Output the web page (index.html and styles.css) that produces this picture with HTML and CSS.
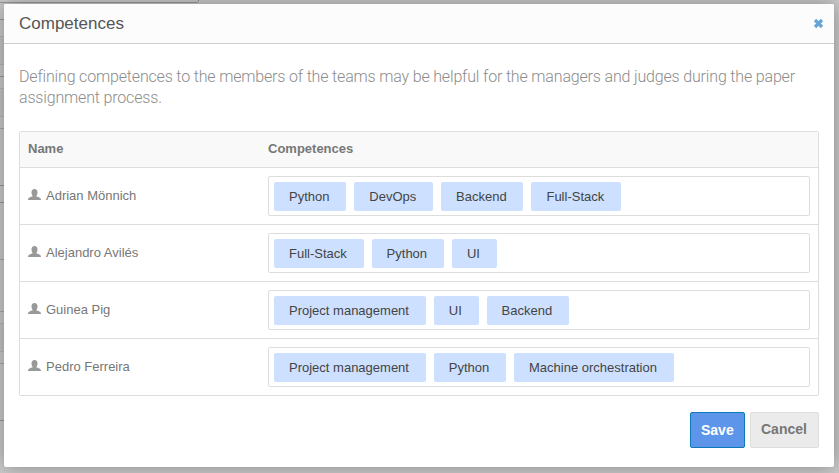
FILE: index.html
```html
<!DOCTYPE html>
<html lang="en">
<head>
<meta charset="utf-8">
<title>Competences</title>
<link rel="stylesheet" href="styles.css">
</head>
<body>
<svg class="defs" width="0" height="0" aria-hidden="true">
  <symbol id="user" viewBox="0 0 13 12">
    <ellipse cx="6.500" cy="3.600" rx="3" ry="3.600"/>
    <path d="M4.500 6h4v1.500c1.500.4 4.500.8 4.500 3.500H0c0-2.700 3-3.100 4.500-3.500z"/>
  </symbol>
</svg>
<svg class="page-lines" width="839" height="473" aria-hidden="true">
  <path class="shade" d="M0 37h4v27H0zM0 89h4v27H0zM0 324h4v27H0z"/>
  <path class="dark" d="M0 2.500h197.500l1-1V0M0 19.500h4M0 76.500h4M0 185.500h4M0 202.500h4M0 420.500h4"/>
  <path class="mid" d="M0 128.500h4M0 259.500h4M0 311.500h4M0 363.500h4"/>
  <path class="light" d="M0 36.500h4M0 64.500h4M0 88.500h4M0 116.500h4M0 323.500h4M0 351.500h4"/>
</svg>
<main class="dialog">
  <header class="dialog-header">
    <h1>Competences</h1>
    <button class="close" aria-label="Close"><svg width="11" height="11" viewBox="0 0 11 11"><path d="M2 2l7 7M9 2l-7 7"/></svg></button>
  </header>
  <div class="dialog-body">
    <p class="intro">Defining competences to the members of the teams may be helpful for the managers and judges during the paper assignment process.</p>
    <div class="table">
      <div class="row head"><span>Name</span><span>Competences</span></div>
      <div class="row"><span class="name"><svg class="user"><use href="#user"/></svg>Adrian Mönnich</span>
        <div class="field"><span>Python</span><span>DevOps</span><span>Backend</span><span>Full-Stack</span></div></div>
      <div class="row"><span class="name"><svg class="user"><use href="#user"/></svg>Alejandro Avilés</span>
        <div class="field"><span>Full-Stack</span><span>Python</span><span>UI</span></div></div>
      <div class="row"><span class="name"><svg class="user"><use href="#user"/></svg>Guinea Pig</span>
        <div class="field"><span>Project management</span><span>UI</span><span>Backend</span></div></div>
      <div class="row"><span class="name"><svg class="user"><use href="#user"/></svg>Pedro Ferreira</span>
        <div class="field"><span>Project management</span><span>Python</span><span>Machine orchestration</span></div></div>
    </div>
    <div class="actions"><button class="btn save">Save</button><button class="btn cancel">Cancel</button></div>
  </div>
</main>
</body>
</html>
```
FILE: styles.css
```css
* { box-sizing: border-box; }
body {
  margin: 0;
  height: 473px;
  padding: 4px 5px 6px 4px;
  overflow: hidden;
  background: #cbcbcb;
  font: 13px "Liberation Sans", Arial, sans-serif;
  color: #777;
}
.defs { position: absolute; }
.page-lines { position: absolute; left: 0; top: 0; fill: none; }
.page-lines .shade { fill: #c5c5c5; }
.page-lines .dark { stroke: #9a9a9a; }
.page-lines .mid { stroke: #a9a9a9; }
.page-lines .light { stroke: #b7b7b7; }
.dialog {
  position: relative;
  height: 463px;
  background: #fff;
  border-radius: 2px;
  box-shadow: 0 0 20px rgba(0, 0, 0, .35);
}
.dialog-header {
  height: 40px;
  display: flex;
  justify-content: space-between;
  align-items: center;
  padding: 0 10px 0 15px;
  background: #fcfcfc;
  border-bottom: 1px solid #ccc;
  border-radius: 2px 2px 0 0;
}
h1 { margin: 0; font-size: 17px; line-height: 20px; font-weight: 400; color: #555; }
.close { display: flex; padding: 0; border: 0; background: none; }
.close path { stroke: #68a5d5; stroke-width: 3.2; }
.dialog-body { padding: 22px 15px 0; }
.intro {
  margin: 0 0 23px;
  font: 300 16px/21px Roboto, sans-serif;
  letter-spacing: -.17px;
  color: #8c8c8c;
}
.table { border: 1px solid #ddd; border-radius: 2px; }
.row {
  display: grid;
  grid-template-columns: 240px 1fr;
  align-items: center;
  height: 57px;
  padding: 0 8px;
  border-bottom: 1px solid #ddd;
  line-height: 15px;
}
.row:last-child { height: 56px; border-bottom: 0; }
.head { height: 36px; padding-bottom: 2px; background: #f9f9f9; font-weight: 700; }
.name { display: flex; gap: 5px; padding-bottom: 2px; }
.user { width: 13px; height: 12px; margin-top: 1px; fill: #999; }
.field {
  display: flex;
  gap: 8px;
  height: 40px;
  padding: 5px;
  border: 1px solid #ddd;
  border-radius: 2px;
}
.field span {
  height: 29px;
  padding: 0 16.800px 0 15px;
  line-height: 29px;
  border-radius: 2px;
  background: #cde0ff;
  color: #444;
}
.actions { display: flex; justify-content: flex-end; gap: 5px; margin-top: 16px; }
.btn {
  height: 36px;
  padding: 0 10px;
  border: 1px solid #ddd;
  border-radius: 2px;
  font: 700 14px/34px "Liberation Sans", Arial, sans-serif;
  text-align: left;
}
.save { width: 55px; background: #5c95ea; border-color: #0a7ab8; color: #fff; }
.cancel { width: 69px; padding-bottom: 2px; line-height: 32px; background: #ebebeb; color: #777; }
```
